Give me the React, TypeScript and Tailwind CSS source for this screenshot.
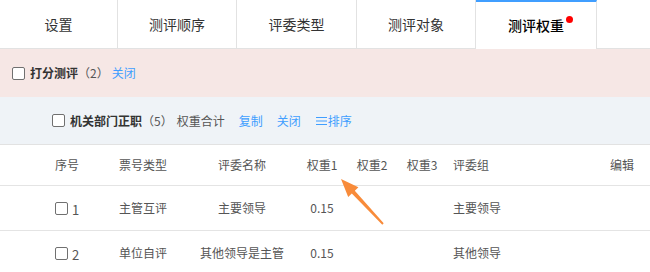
import React from "react"

const tabs = ["设置", "测评顺序", "评委类型", "测评对象"]
const tabWidths = ["w-[118px]", "w-[119px]", "w-[120px]", "w-[119px]"]

const rows = [
  { no: "1", type: "主管互评", name: "主要领导", w1: "0.15", group: "主要领导" },
  { no: "2", type: "单位自评", name: "其他领导是主管", w1: "0.15", group: "其他领导" },
]

function Box() {
  return <span className="inline-block w-[13px] h-[13px] border border-[#707070] rounded-[2px] bg-white shrink-0" />
}

export default function App() {
  return (
    <div
      className="relative w-[650px] h-[272px] overflow-hidden bg-white text-[12px] text-[#333]"
      style={{ fontFamily: '"Noto Sans CJK SC", "Noto Sans", sans-serif' }}
    >
      {/* tabs */}
      <div className="flex h-[49px] border-b border-[#e2e2e2]">
        {tabs.map((t, i) => (
          <div
            key={t}
            className={`${tabWidths[i]} flex items-center justify-center border-r border-[#e2e2e2] text-[14px] text-[#333]`}
          >
            {t}
          </div>
        ))}
        <div className="relative z-10 w-[121px] h-[49px] -mb-px flex items-center justify-center bg-white border-t-2 border-t-[#409eff] border-r border-[#e2e2e2] text-[14px] text-[#000] font-medium">
          <span className="relative">
            测评权重
            <span className="absolute -right-[9px] top-[1px] w-[7px] h-[7px] rounded-full bg-[#ff0000]" />
          </span>
        </div>
      </div>

      {/* group 1 */}
      <div className="flex items-center h-[48px] bg-[#f6e7e5] pl-[12px]">
        <Box />
        <span className="ml-[5px] font-bold text-[#333]">打分测评</span>
        <span className="text-[#555]">（2）</span>
        <span className="ml-[3px] text-[#409eff]">关闭</span>
      </div>

      {/* group 2 */}
      <div className="flex items-center h-[48px] bg-[#eff3f7] border-b border-[#e2e2e2] pl-[52px]">
        <Box />
        <span className="ml-[5px] font-bold text-[#333]">机关部门正职</span>
        <span className="text-[#555]">（5）</span>
        <span className="ml-[4px] text-[#555]">权重合计</span>
        <span className="ml-[14px] text-[#409eff]">复制</span>
        <span className="ml-[14px] text-[#409eff]">关闭</span>
        <span className="ml-[15px] flex items-center text-[#409eff]">
          <svg width="11" height="10" viewBox="0 0 11 10" className="mr-[1px]">
            <path d="M0 1.5h11M0 5h11M0 8.5h11" stroke="#409eff" strokeWidth="1.2" />
          </svg>
          排序
        </span>
      </div>

      {/* header */}
      <div className="flex items-center h-[41px] border-b border-[#e4e4e4] pl-[37px] text-[#555]">
        <div className="w-[60px] text-center">序号</div>
        <div className="w-[92px] text-center">票号类型</div>
        <div className="w-[106px] text-center">评委名称</div>
        <div className="w-[54px] text-center">权重1</div>
        <div className="w-[46px] text-center">权重2</div>
        <div className="w-[54px] text-center">权重3</div>
        <div className="w-[151px] pl-[4px]">评委组</div>
        <div className="w-[44px] text-center">编辑</div>
      </div>

      {rows.map((r) => (
        <div key={r.no} className="flex items-center h-[45px] border-b border-[#e4e4e4] pl-[37px] text-[#555]">
          <div className="w-[60px] flex items-center justify-center gap-[4px]">
            <Box />
            <span className="text-[13px] mt-[3px]">{r.no}</span>
          </div>
          <div className="w-[92px] text-center">{r.type}</div>
          <div className="w-[106px] text-center">{r.name}</div>
          <div className="w-[54px] text-center">{r.w1}</div>
          <div className="w-[46px]" />
          <div className="w-[54px]" />
          <div className="w-[151px] pl-[4px]">{r.group}</div>
          <div className="w-[44px]" />
        </div>
      ))}

      {/* annotation arrow */}
      <svg className="absolute left-0 top-0 pointer-events-none" width="650" height="272">
        <polygon
          points="341,179 358.4,187.3 354.8,190.7 383.7,223.3 382.3,224.7 351.8,193.5 348.2,196.9"
          fill="#f88b3a"
        />
      </svg>
    </div>
  )
}
